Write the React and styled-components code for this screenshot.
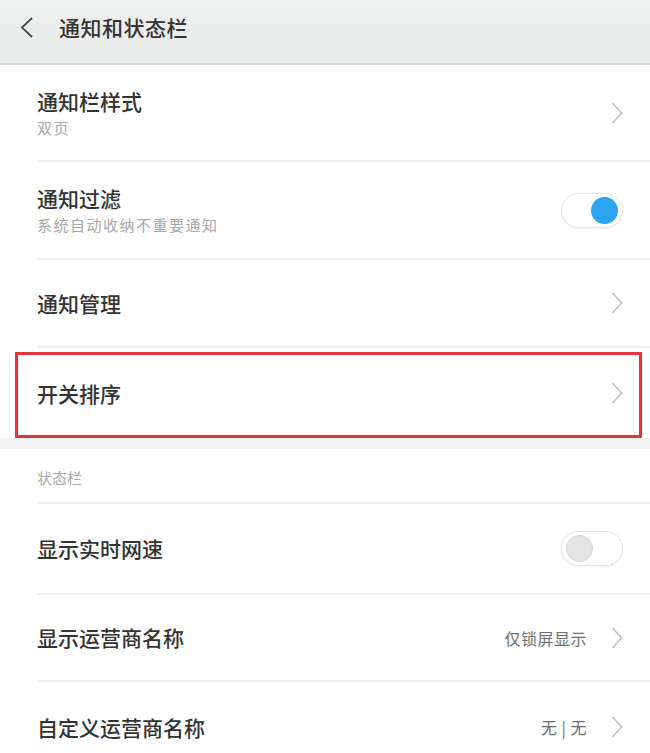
import React, { useState } from 'react';
import styled, { createGlobalStyle } from 'styled-components';

const GlobalStyle = createGlobalStyle`
  * { box-sizing: border-box; }
  body {
    margin: 0;
    background: #fff;
    font-family: "Noto Sans CJK SC", "Noto Sans", sans-serif;
    color: #333;
  }
`;

const Page = styled.div`
  width: 650px;
  min-height: 753px;
  background: #fff;
  overflow: hidden;
`;

const Header = styled.header`
  height: 65px;
  display: flex;
  align-items: center;
  gap: 26px;
  padding: 0 0 9px 20px;
  background: linear-gradient(#eff0f0, #e9ebeb);
  border-bottom: 2px solid #d8dada;
`;

const HeaderTitle = styled.h1`
  margin: 0;
  font-size: 21px;
  font-weight: 500;
  color: #333;
  letter-spacing: 0.5px;
`;

const Row = styled.div`
  position: relative;
  height: ${p => p.$h}px;
  margin-left: 37px;
  padding-right: 27px;
  display: flex;
  align-items: center;
  justify-content: space-between;
  border-bottom: ${p => (p.$last ? 'none' : '2px solid #efefef')};
`;

const TextBlock = styled.div`
  display: flex;
  flex-direction: column;
  gap: 3px;
`;

const Title = styled.div`
  font-size: 21px;
  line-height: 27px;
  font-weight: 500;
  color: #333;
`;

const Sub = styled.div`
  font-size: 15px;
  line-height: 20px;
  color: #a8a8a8;
  letter-spacing: 1.5px;
`;

const Right = styled.div`
  display: flex;
  align-items: center;
  gap: 24px;
`;

const Value = styled.span`
  font-size: 16px;
  color: #6e6e6e;
  letter-spacing: 0.5px;
`;

const Track = styled.button`
  width: 62px;
  height: 35px;
  padding: 0 4px;
  border-radius: 18px;
  border: 1.5px solid #e4e4e4;
  background: #fff;
  box-shadow: 0 1px 2px rgba(0, 0, 0, 0.06);
  display: flex;
  align-items: center;
  justify-content: ${p => (p.$on ? 'flex-end' : 'flex-start')};
  cursor: pointer;
`;

const Knob = styled.span`
  width: 27px;
  height: 27px;
  border-radius: 50%;
  background: ${p => (p.$on ? '#2aa4ef' : '#e3e4e3')};
  border: ${p => (p.$on ? 'none' : '1px solid #d6d7d6')};
`;

const Gap = styled.div`
  height: 11px;
  background: #f1f2f2;
`;

const SectionLabel = styled.div`
  height: 55px;
  margin-left: 37px;
  display: flex;
  align-items: center;
  padding-top: 3px;
  font-size: 15px;
  color: #a8a8a8;
  border-bottom: 2px solid #efefef;
`;

const Highlight = styled.div`
  position: absolute;
  left: -22px;
  right: 8px;
  top: 4px;
  bottom: 0;
  border: 3px solid #e0363c;
  pointer-events: none;
`;

const Chevron = () => (
  <svg width="12" height="22" viewBox="0 0 12 22">
    <polyline points="1.5,1 10.5,11 1.5,21" fill="none" stroke="#bdbdbd" strokeWidth="1.5" />
  </svg>
);

const BackIcon = () => (
  <svg width="13" height="21" viewBox="0 0 13 21">
    <polyline points="12,1 2,10.5 12,20" fill="none" stroke="#4a4a4a" strokeWidth="1.8" />
  </svg>
);

const Toggle = ({ on, onClick }) => (
  <Track $on={on} onClick={onClick}>
    <Knob $on={on} />
  </Track>
);

export default function App() {
  const [filter, setFilter] = useState(true);
  const [speed, setSpeed] = useState(false);

  return (
    <Page>
      <GlobalStyle />
      <Header>
        <BackIcon />
        <HeaderTitle>通知和状态栏</HeaderTitle>
      </Header>

      <Row $h={97}>
        <TextBlock>
          <Title>通知栏样式</Title>
          <Sub>双页</Sub>
        </TextBlock>
        <Chevron />
      </Row>
      <Row $h={98}>
        <TextBlock>
          <Title>通知过滤</Title>
          <Sub>系统自动收纳不重要通知</Sub>
        </TextBlock>
        <Toggle on={filter} onClick={() => setFilter(!filter)} />
      </Row>
      <Row $h={88}>
        <Title>通知管理</Title>
        <Chevron />
      </Row>
      <Row $h={90} $last>
        <Title>开关排序</Title>
        <Chevron />
        <Highlight />
      </Row>

      <Gap />
      <SectionLabel>状态栏</SectionLabel>

      <Row $h={91}>
        <Title>显示实时网速</Title>
        <Toggle on={speed} onClick={() => setSpeed(!speed)} />
      </Row>
      <Row $h={87}>
        <Title>显示运营商名称</Title>
        <Right>
          <Value>仅锁屏显示</Value>
          <Chevron />
        </Right>
      </Row>
      <Row $h={90} $last>
        <Title>自定义运营商名称</Title>
        <Right>
          <Value>无 | 无</Value>
          <Chevron />
        </Right>
      </Row>
    </Page>
  );
}
